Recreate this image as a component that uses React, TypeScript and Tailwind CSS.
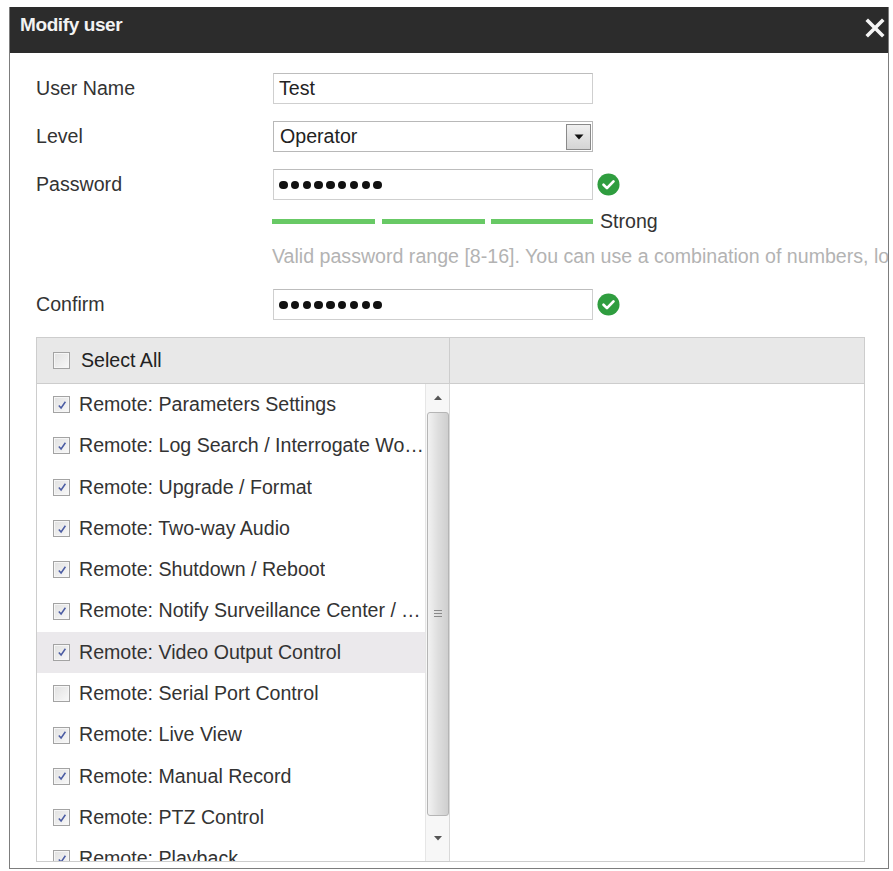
import React from "react";

const perms: { label: string; checked: boolean; active?: boolean }[] = [
    { label: "Remote: Parameters Settings", checked: true },
    { label: "Remote: Log Search / Interrogate Working Status", checked: true },
    { label: "Remote: Upgrade / Format", checked: true },
    { label: "Remote: Two-way Audio", checked: true },
    { label: "Remote: Shutdown / Reboot", checked: true },
    { label: "Remote: Notify Surveillance Center / Trigger Alarm Output", checked: true },
    { label: "Remote: Video Output Control", checked: true, active: true },
    { label: "Remote: Serial Port Control", checked: false },
    { label: "Remote: Live View", checked: true },
    { label: "Remote: Manual Record", checked: true },
    { label: "Remote: PTZ Control", checked: true },
    { label: "Remote: Playback", checked: true },
];

const Check = ({ checked }: { checked: boolean }) => (
    <span className="flex h-[17px] w-[17px] shrink-0 items-center justify-center border border-[#a3a3a3] bg-[#f6f6f6] p-px">
        <span className="flex h-full w-full items-center justify-center bg-gradient-to-br from-[#e2e2e2] to-[#f7f7f7]">
            {checked && (
                <svg width="10" height="10" viewBox="0 0 10 10">
                    <path d="M1.8 5.4 L4.1 8 L8.4 1.8" fill="none" stroke="#4b5ca3" strokeWidth="1.5" />
                </svg>
            )}
        </span>
    </span>
);

const OkIcon = () => (
    <svg width="23" height="23" viewBox="0 0 24 24" className="shrink-0">
        <circle cx="12" cy="12" r="11.5" fill="#2f9d3f" />
        <path d="M6.8 12.3 L10.4 15.8 L17.2 8.8" fill="none" stroke="#fff" strokeWidth="2.8" strokeLinecap="round" strokeLinejoin="round" />
    </svg>
);

const Field = ({ children }: { children: React.ReactNode }) => (
    <div className="flex h-[31px] w-[320px] items-center border border-[#cfcfcf] border-t-[#bdbdbd] bg-white px-[5px] text-[#222]">
        {children}
    </div>
);

const Dots = () => (
    <span className="flex gap-[3.3px] pt-[1px]">
        {Array.from({ length: 9 }).map((_, i) => (
            <span key={i} className="h-[8.5px] w-[8.5px] rounded-full bg-[#111]" />
        ))}
    </span>
);

export default function App() {
    return (
        <main
            className="min-h-screen w-full bg-white pl-[9px] pt-[7px]"
            style={{ fontFamily: '"Liberation Sans", Arial, sans-serif' }}
        >
            <div className="flex h-[862px] w-[880px] flex-col overflow-hidden border border-[#7d7d7d] border-t-0 bg-white">
                <div className="flex h-[46px] shrink-0 items-center justify-between bg-[#2c2c2c] pb-[9px] pl-[10px] pr-[3px]">
                    <h1 className="text-[19px] font-bold tracking-[-0.4px] text-[#f2f2f2]">Modify user</h1>
                    <svg width="20" height="20" viewBox="0 0 20 20" className="mt-[5px]">
                        <path d="M3 3 L17 17 M17 3 L3 17" stroke="#f5f5f5" strokeWidth="3.6" strokeLinecap="square" />
                    </svg>
                </div>

                <div className="flex flex-col pl-[26px] text-[19.6px] text-[#333]">
                    <div className="mt-[20px] flex items-center">
                        <label className="w-[237px]">User Name</label>
                        <Field>Test</Field>
                    </div>
                    <div className="mt-[17px] flex items-center">
                        <label className="w-[237px]">Level</label>
                        <div className="flex h-[31px] w-[320px] items-center justify-between border border-[#b8b8b8] bg-white pl-[6px] pr-[1px] text-[#222]">
                            <span>Operator</span>
                            <span className="flex h-[26px] w-[25px] items-center justify-center border border-[#8a8a8a] bg-gradient-to-b from-[#f0f0f0] to-[#d4d4d4]">
                                <svg width="10" height="6" viewBox="0 0 10 6">
                                    <path d="M0.5 0.5 L9.5 0.5 L5 5.5 Z" fill="#111" />
                                </svg>
                            </span>
                        </div>
                    </div>
                    <div className="mt-[17px] flex items-center">
                        <label className="w-[237px]">Password</label>
                        <Field>
                            <Dots />
                        </Field>
                        <span className="ml-[4px]">
                            <OkIcon />
                        </span>
                    </div>
                    <div className="mt-[12px] flex items-center pl-[236px]">
                        <span className="h-[5px] w-[103px] bg-[#68c965]" />
                        <span className="ml-[7px] h-[5px] w-[103px] bg-[#68c965]" />
                        <span className="ml-[6px] h-[5px] w-[102px] bg-[#68c965]" />
                        <span className="ml-[7px] leading-none">Strong</span>
                    </div>
                    <p className="mt-[10px] whitespace-nowrap pl-[236px] text-[#b3b3b3]">
                        Valid password range [8-16]. You can use a combination of numbers, lowercase, uppercase and special character for your password with at least two kinds of them contained.
                    </p>
                    <div className="mt-[18px] flex items-center">
                        <label className="w-[237px]">Confirm</label>
                        <Field>
                            <Dots />
                        </Field>
                        <span className="ml-[4px]">
                            <OkIcon />
                        </span>
                    </div>

                    <div className="mt-[17px] flex h-[525px] w-[829px] flex-col border border-[#cdcdcd]">
                        <div className="flex h-[46px] shrink-0 border-b border-[#cdcdcd] bg-[#e8e8e8]">
                            <div className="flex w-[413px] items-center gap-[11px] border-r border-[#cdcdcd] pl-[16px]">
                                <Check checked={false} />
                                <span className="text-[#222]">Select All</span>
                            </div>
                            <div className="flex-1" />
                        </div>
                        <div className="flex min-h-0 flex-1">
                            <div className="flex w-[413px] border-r border-[#d9d9d9]">
                                <div className="flex min-w-0 flex-1 flex-col overflow-hidden">
                                    {perms.map((p) => (
                                        <div
                                            key={p.label}
                                            className={`flex h-[41.3px] shrink-0 items-center gap-[9px] pl-[16px] pr-[1px] ${p.active ? "bg-[#ebe9ec]" : ""}`}
                                        >
                                            <Check checked={p.checked} />
                                            <span className="truncate text-[#333]">{p.label}</span>
                                        </div>
                                    ))}
                                </div>
                                <div className="flex w-[24px] shrink-0 flex-col items-center border-l border-[#e6e6e6] bg-[#f7f7f7]">
                                    <div className="flex h-[28px] items-center justify-center">
                                        <svg width="8" height="5" viewBox="0 0 8 5">
                                            <path d="M0 5 L4 0.5 L8 5 Z" fill="#555" />
                                        </svg>
                                    </div>
                                    <div className="flex h-[404px] w-[22px] items-center justify-center rounded-[3px] border border-[#b5b5b5] bg-gradient-to-r from-[#f2f2f2] via-[#dedede] to-[#cfcfcf]">
                                        <div className="flex flex-col gap-[2px]">
                                            <span className="h-px w-[8px] bg-[#8a8a8a]" />
                                            <span className="h-px w-[8px] bg-[#8a8a8a]" />
                                            <span className="h-px w-[8px] bg-[#8a8a8a]" />
                                        </div>
                                    </div>
                                    <div className="flex flex-1 items-center justify-center">
                                        <svg width="8" height="5" viewBox="0 0 8 5">
                                            <path d="M0 0 L8 0 L4 4.5 Z" fill="#555" />
                                        </svg>
                                    </div>
                                </div>
                            </div>
                            <div className="flex-1 bg-white" />
                        </div>
                    </div>
                </div>
            </div>
        </main>
    );
}
